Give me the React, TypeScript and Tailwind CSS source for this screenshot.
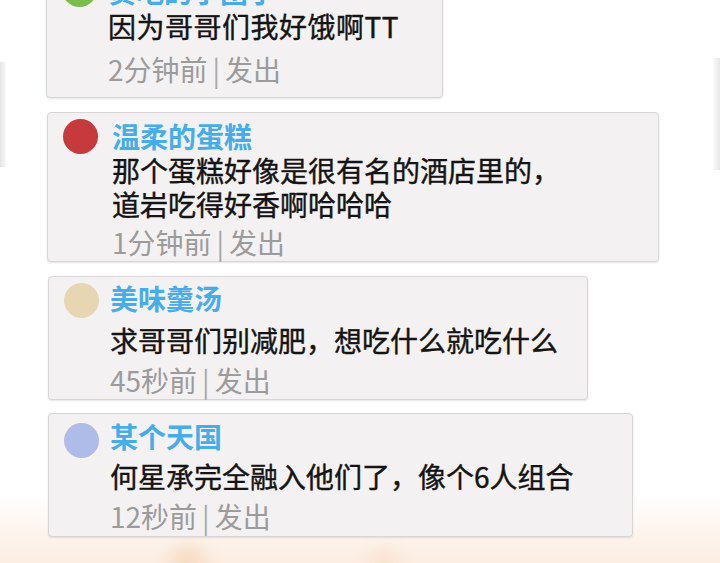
import React from "react";

type Card = {
  name: string;
  lines: string[];
  time: string;
  avatar: string;
  card: string;
  textCol: string;
  nameCls: string;
  bodyCls: string;
  timeCls: string;
  avatarCls: string;
};

const cards: Card[] = [
  {
    name: "贪吃的小团子",
    lines: ["因为哥哥们我好饿啊TT"],
    time: "2分钟前",
    avatar: "bg-[#79bd4c]",
    card: "-mt-[37px] ml-[46px] w-[397px] pt-[9px] pb-[11px]",
    textCol: "ml-[11px]",
    nameCls: "h-[36px] leading-[36px]",
    bodyCls: "h-[34px] leading-[34px] tracking-[0.5px]",
    timeCls: "mt-[9px] h-[34px] leading-[34px]",
    avatarCls: "-mt-[1px]",
  },
  {
    name: "温柔的蛋糕",
    lines: ["那个蛋糕好像是很有名的酒店里的，", "道岩吃得好香啊哈哈哈"],
    time: "1分钟前",
    avatar: "bg-[#c63a3e]",
    card: "mt-[14px] ml-[47px] w-[612px] pt-[6px] pb-[2px]",
    textCol: "ml-[14px]",
    nameCls: "h-[34px] leading-[34px]",
    bodyCls: "h-[34px] leading-[34px]",
    timeCls: "mt-[4px] h-[34px] leading-[34px]",
    avatarCls: "mt-[0px]",
  },
  {
    name: "美味羹汤",
    lines: ["求哥哥们别减肥，想吃什么就吃什么"],
    time: "45秒前",
    avatar: "bg-[#e6d7b2]",
    card: "mt-[14px] ml-[48px] w-[540px] pt-[0px] pb-[0px]",
    textCol: "ml-[11px]",
    nameCls: "h-[42px] leading-[42px]",
    bodyCls: "h-[42px] leading-[42px]",
    timeCls: "h-[38px] leading-[38px]",
    avatarCls: "mt-[6px]",
  },
  {
    name: "某个天国",
    lines: ["何星承完全融入他们了，像个6人组合"],
    time: "12秒前",
    avatar: "bg-[#b0bce8]",
    card: "mt-[13px] ml-[48px] w-[585px] pt-[2px] pb-[0px]",
    textCol: "ml-[11px]",
    nameCls: "h-[40px] leading-[40px]",
    bodyCls: "h-[40px] leading-[40px]",
    timeCls: "h-[40px] leading-[40px]",
    avatarCls: "mt-[7px]",
  },
];

function CommentCard({ c }: { c: Card }) {
  return (
    <div
      className={`flex rounded-[4px] border border-[#d9d5d6] bg-[#f4f1f2] shadow-[0_1px_2px_rgba(0,0,0,0.10)] ${c.card}`}
    >
      <div className={`ml-[15px] h-[35px] w-[35px] shrink-0 rounded-full ${c.avatar} ${c.avatarCls}`} />
      <div className={`flex flex-col ${c.textCol}`}>
        <div className={`whitespace-nowrap text-[28px] font-bold text-[#47ade8] ${c.nameCls}`}>{c.name}</div>
        {c.lines.map((l, i) => (
          <div
            key={i}
            className={`whitespace-nowrap text-[28px] font-normal text-[#141414] [-webkit-text-stroke:0.4px_#141414] ${c.bodyCls}`}
          >
            {l}
          </div>
        ))}
        <div className={`whitespace-nowrap text-[28px] font-normal text-[#9b9b9b] ${c.timeCls}`}>
          {c.time}
          <span className="mx-[5px] text-[#a8a8a8]">|</span>
          发出
        </div>
      </div>
    </div>
  );
}

export default function App() {
  return (
    <div
      className="relative h-[563px] w-[720px] overflow-hidden bg-[linear-gradient(to_bottom,#ffffff_0%,#ffffff_88%,#fdf4ec_95%,#fcede2_100%)]"
      style={{ fontFamily: '"Noto Sans CJK SC", "Noto Sans", sans-serif' }}
    >
      <div className="pointer-events-none absolute left-0 top-[62px] h-[105px] w-[6px] bg-[linear-gradient(to_right,#e4e4e4,#f8f8f8)]" />
      <div className="pointer-events-none absolute right-0 top-[58px] h-[112px] w-[7px] bg-[linear-gradient(to_left,#e6e6e6,#fafafa)]" />
      <div className="pointer-events-none absolute left-[170px] top-[545px] h-[36px] w-[36px] rounded-full bg-[#f6dcc4] blur-[8px]" />
      <div className="pointer-events-none absolute left-[370px] top-[548px] h-[32px] w-[28px] rounded-full bg-[#f8e3d0] blur-[8px]" />
      <div className="relative flex flex-col">
        {cards.map((c, i) => (
          <CommentCard key={i} c={c} />
        ))}
      </div>
    </div>
  );
}
